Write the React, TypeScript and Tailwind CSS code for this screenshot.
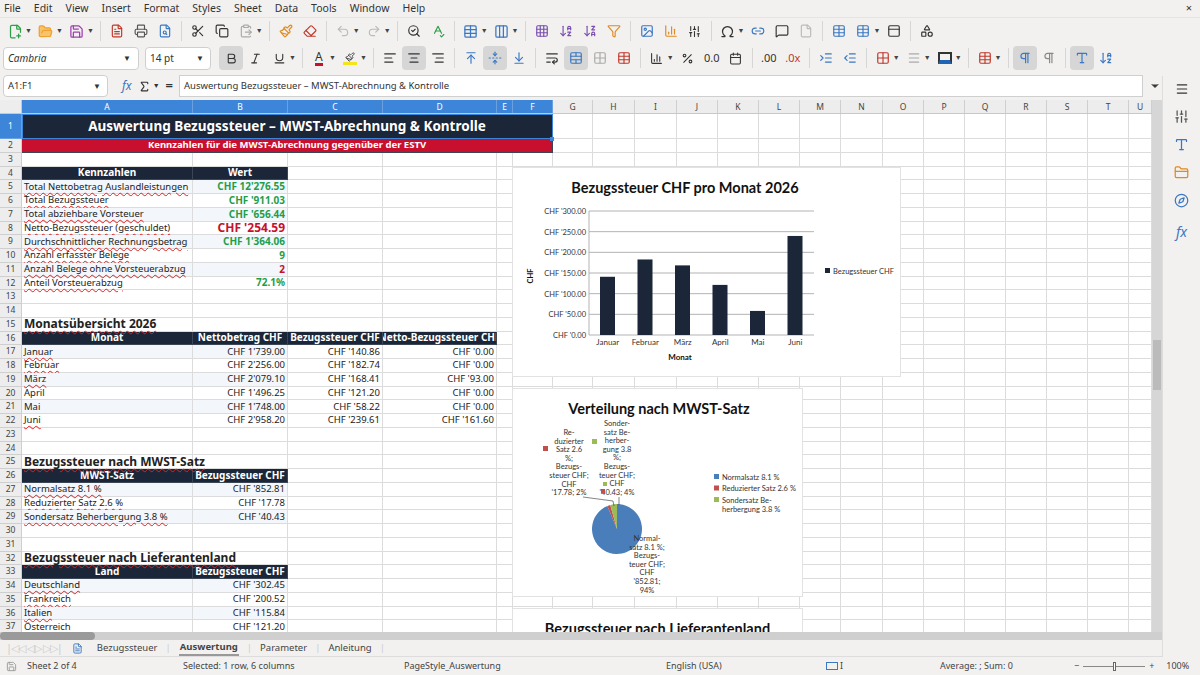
import {
  FilePlus2, FolderOpen, Save, FileText, Printer, FileSearch, Scissors, Copy, ClipboardPaste,
  Paintbrush, Eraser, Undo2, Redo2, SearchCheck, SpellCheck, Table, Columns3, ArrowDownAZ,
  ArrowDownZA, Filter, Image, BarChart3, Sigma, Link2, MessageSquare, File, PanelTop, Shapes,
  Bold, Italic, Underline, AlignLeft, AlignCenter, AlignRight, ArrowUpToLine, FoldVertical,
  ArrowDownToLine, WrapText, TableCellsMerge, Percent, Calendar, IndentIncrease, IndentDecrease,
  Grid2x2, Menu, Sliders, Type, FolderClosed, Compass, ChevronDown, Omega, Grid3x3, Pilcrow,
} from "lucide-react";

const ui = "font-[family-name:'Noto_Sans',sans-serif]";
const serif = "font-[family-name:'Liberation_Serif','DejaVu_Serif',serif]";
const sans = "font-[family-name:'Open_Sans','Noto_Sans',sans-serif]";
const chartFont = "Lato, 'Liberation Sans', sans-serif";

const cols = [
  ["A", 171], ["B", 95], ["C", 95], ["D", 114], ["E", 16], ["F", 40], ["G", 40], ["H", 42], ["I", 42],
  ["J", 41], ["K", 41], ["L", 41], ["M", 41], ["N", 42], ["O", 41], ["P", 41], ["Q", 41], ["R", 41],
  ["S", 41], ["T", 41], ["U", 23],
] as const;

type Cell = { t: string; cls?: string; span?: number; font?: string };
const wavy = "underline decoration-wavy decoration-[#e02020] decoration-1 underline-offset-2";
const hdr = `bg-[#1b2638] text-white font-bold text-center text-[10px]`;
const green = "text-[#1e9e4a] font-bold text-right text-[10px]";
const red = "text-[#c8102e] font-bold text-right text-[10px]";

const rows: Record<number, Cell[]> = {
  1: [{ t: "Auswertung Bezugssteuer – MWST-Abrechnung & Kontrolle", span: 6, cls: `bg-[#1b2638] text-white font-bold text-center text-[13.5px] outline outline-1 outline-[#3d85d8] -outline-offset-1` }],
  2: [{ t: "Kennzahlen für die MWST-Abrechnung gegenüber der ESTV", span: 6, cls: `bg-[#c8102e] text-white font-bold text-center text-[9.5px]` }],
  4: [{ t: "Kennzahlen", cls: hdr }, { t: "Wert", cls: hdr }],
  5: [{ t: "Total Nettobetrag Auslandleistungen", cls: wavy }, { t: "CHF 12'276.55", cls: green }],
  6: [{ t: "Total Bezugssteuer", cls: wavy }, { t: "CHF '911.03", cls: green }],
  7: [{ t: "Total abziehbare Vorsteuer", cls: wavy }, { t: "CHF '656.44", cls: green }],
  8: [{ t: "Netto-Bezugssteuer (geschuldet)", cls: wavy }, { t: "CHF '254.59", cls: "text-[#c8102e] font-bold text-right text-[12px]" }],
  9: [{ t: "Durchschnittlicher Rechnungsbetrag", cls: wavy }, { t: "CHF 1'364.06", cls: green }],
  10: [{ t: "Anzahl erfasster Belege", cls: wavy }, { t: "9", cls: green }],
  11: [{ t: "Anzahl Belege ohne Vorsteuerabzug", cls: wavy }, { t: "2", cls: red }],
  12: [{ t: "Anteil Vorsteuerabzug", cls: wavy }, { t: "72.1%", cls: green }],
  15: [{ t: "Monatsübersicht 2026", cls: `font-bold text-[12px] ${wavy}` }],
  16: [{ t: "Monat", cls: hdr }, { t: "Nettobetrag CHF", cls: hdr }, { t: "Bezugssteuer CHF", cls: hdr }, { t: "Netto-Bezugssteuer CHF", cls: hdr }],
  25: [{ t: "Bezugssteuer nach MWST-Satz", cls: `font-bold text-[12px] ${wavy}` }],
  26: [{ t: "MWST-Satz", cls: hdr }, { t: "Bezugssteuer CHF", cls: hdr }],
  32: [{ t: "Bezugssteuer nach Lieferantenland", cls: `font-bold text-[12px] ${wavy}` }],
  33: [{ t: "Land", cls: hdr }, { t: "Bezugssteuer CHF", cls: hdr }],
};
const months = [
  ["Januar", "CHF 1'739.00", "CHF '140.86", "CHF '0.00"],
  ["Februar", "CHF 2'256.00", "CHF '182.74", "CHF '0.00"],
  ["März", "CHF 2'079.10", "CHF '168.41", "CHF '93.00"],
  ["April", "CHF 1'496.25", "CHF '121.20", "CHF '0.00"],
  ["Mai", "CHF 1'748.00", "CHF '58.22", "CHF '0.00"],
  ["Juni", "CHF 2'958.20", "CHF '239.61", "CHF '161.60"],
];
months.forEach((m, i) => {
  rows[17 + i] = [
    { t: m[0], cls: i === 3 || i === 4 ? "" : wavy },
    ...m.slice(1).map((v) => ({ t: v, cls: "text-right" })),
  ];
});
[["Normalsatz 8.1 %", "CHF '852.81"], ["Reduzierter Satz 2.6 %", "CHF '17.78"], ["Sondersatz Beherbergung 3.8 %", "CHF '40.43"]].forEach((r, i) => {
  rows[27 + i] = [{ t: r[0], cls: wavy, font: sans }, { t: r[1], cls: "text-right", font: sans }];
});
[["Deutschland", "CHF '302.45"], ["Frankreich", "CHF '200.52"], ["Italien", "CHF '115.84"], ["Österreich", "CHF '121.20"]].forEach((r, i) => {
  rows[34 + i] = [{ t: r[0], cls: i < 3 ? wavy : "", font: sans }, { t: r[1], cls: "text-right", font: sans }];
});
const banded = new Set([5, 7, 9, 11, 17, 19, 21, 27, 29, 34, 36]);

function Sep() {
  return <div className="w-px h-5 bg-[#d6d6d6] mx-1" />;
}
function Tb({ children, on }: { children: React.ReactNode; on?: boolean }) {
  return <div className={`h-6 min-w-6 px-[3px] flex items-center justify-center rounded-sm ${on ? "bg-[#d6d6d6]" : ""}`}>{children}</div>;
}
function Dd() {
  return <span className="text-[7px] text-[#444] -ml-0.5 mr-0.5">▼</span>;
}

function BarChart() {
  const vals = [140.86, 182.74, 168.41, 121.2, 58.22, 239.61];
  const names = ["Januar", "Februar", "März", "April", "Mai", "Juni"];
  const x0 = 76, x1 = 301, y0 = 167, h = 124;
  return (
    <div className="absolute left-[512px] top-[67px] w-[389px] h-[210px] bg-white border border-[#e2e2e2]">
      <svg width="389" height="210" style={{ fontFamily: chartFont }}>
        <text x="172" y="25" textAnchor="middle" fontSize="14.5" fontWeight="700" fill="#111">Bezugssteuer CHF pro Monat 2026</text>
        {[0, 50, 100, 150, 200, 250, 300].map((v) => {
          const y = y0 - (v / 300) * h;
          return (
            <g key={v}>
              <line x1={x0} x2={x1} y1={y} y2={y} stroke="#b3b3b3" strokeWidth="1" />
              <text x={x0 - 3} y={y + 3} textAnchor="end" fontSize="7.5" fill="#333">{`CHF '${v}.00`}</text>
            </g>
          );
        })}
        <line x1={x0} x2={x0} y1={y0 - h} y2={y0} stroke="#b3b3b3" />
        {vals.map((v, i) => {
          const cw = (x1 - x0) / 6;
          const bh = (v / 300) * h;
          return (
            <g key={i}>
              <rect x={x0 + cw * i + 11} y={y0 - bh} width="15" height={bh} fill="#1b2638" />
              <text x={x0 + cw * i + cw / 2} y={y0 + 10} textAnchor="middle" fontSize="8" fill="#333">{names[i]}</text>
            </g>
          );
        })}
        <text x="167" y="192" textAnchor="middle" fontSize="8" fontWeight="700" fill="#111">Monat</text>
        <text x="20" y="108" textAnchor="middle" fontSize="7.5" fontWeight="700" fill="#111" transform="rotate(-90 20 108)">CHF</text>
        <rect x="312" y="100" width="5" height="5" fill="#1b2638" />
        <text x="320" y="105.5" fontSize="7.5" fill="#333">Bezugssteuer CHF</text>
      </svg>
    </div>
  );
}

function PieChart() {
  const cx = 104, cy = 140, r = 25;
  const data = [
    [0.937, "#4a7ebb"],
    [0.0195, "#c0504d"],
    [0.0435, "#9bbb59"],
  ] as const;
  let a = 0;
  const slices = data.map(([p, c], i) => {
    const s = a, e = a + p * Math.PI * 2;
    a = e;
    const pt = (t: number) => `${cx + r * Math.sin(t)} ${cy - r * Math.cos(t)}`;
    return <path key={i} d={`M${cx} ${cy} L${pt(s)} A${r} ${r} 0 ${p > 0.5 ? 1 : 0} 1 ${pt(e)} Z`} fill={c} />;
  });
  const lines = (arr: string[], x: number, y: number) =>
    arr.map((l, i) => (
      <text key={i} x={x} y={y + i * 8.6} textAnchor="middle" fontSize="7.5" fill="#333">{l}</text>
    ));
  return (
    <div className="absolute left-[512px] top-[288px] w-[291px] h-[209px] bg-white border border-[#e2e2e2]">
      <svg width="291" height="209" style={{ fontFamily: chartFont }}>
        <text x="146" y="25" textAnchor="middle" fontSize="14.5" fontWeight="700" fill="#111">Verteilung nach MWST-Satz</text>
        {slices}
        {lines(["Re-", "duzierter", "Satz 2.6", "%;", "Bezugs-", "steuer CHF;", "CHF", "'17.78; 2%"], 56, 46)}
        {lines(["Sonder-", "satz Be-", "herber-", "gung 3.8", "%;", "Bezugs-", "teuer CHF;", "CHF", "'40.43; 4%"], 104, 37)}
        {lines(["Normal-", "satz 8.1 %;", "Bezugs-", "teuer CHF;", "CHF", "'852.81;", "94%"], 134, 152)}
        <rect x="30" y="57" width="5" height="5" fill="#c0504d" />
        <rect x="79" y="50" width="5" height="5" fill="#9bbb59" />
        <rect x="90" y="93" width="4" height="4" fill="#9bbb59" />
        <rect x="88" y="100" width="4" height="4" fill="#c0504d" />
        <polyline points="70,108 100,112 101,117" fill="none" stroke="#333" strokeWidth="0.6" />
        <line x1="106" y1="108" x2="106" y2="116" stroke="#333" strokeWidth="0.6" />
        {[["Normalsatz 8.1 %", "#4a7ebb"], ["Reduzierter Satz 2.6 %", "#c0504d"], ["Sondersatz Be-", "#9bbb59"]].map(([t, c], i) => (
          <g key={i}>
            <rect x="201" y={85 + i * 11.5} width="5" height="5" fill={c} />
            <text x="209" y={90.5 + i * 11.5} fontSize="7.5" fill="#333">{t}</text>
          </g>
        ))}
        <text x="209" y="122.5" fontSize="7.5" fill="#333">herbergung 3.8 %</text>
      </svg>
    </div>
  );
}

function Grid() {
  return (
    <div className="relative flex-1 overflow-hidden bg-white">
      <div className="flex h-[14px] bg-[#ededed] border-b border-[#c8c8c8]">
        <div className="w-[22px] shrink-0 border-r border-[#c8c8c8]" />
        {cols.map(([n, w], i) => (
          <div key={n} style={{ width: w }} className={`shrink-0 text-[8.5px] leading-[14px] text-center border-r ${i < 6 ? "bg-[#3d85d8] text-white border-[#6aa0e0]" : "text-[#444] border-[#cfcfcf]"}`}>{n}</div>
        ))}
      </div>
      {Array.from({ length: 37 }, (_, k) => {
        const r = k + 1;
        const cells = rows[r] ?? [];
        const out: React.ReactNode[] = [];
        let ci = 0, idx = 0;
        while (ci < cols.length) {
          const c = idx < cells.length ? cells[idx] : undefined;
          const span = c?.span ?? 1;
          const w = cols.slice(ci, ci + span).reduce((s, x) => s + x[1], 0);
          const cls = c?.cls ?? "";
          const isHdr = cls.includes("bg-[#1b2638]") || cls.includes("bg-[#c8102e]");
          const hasColor = /text-\[#|text-white/.test(cls);
          const band = banded.has(r) && ci < 2 && !isHdr ? "bg-[#f3f6fa]" : "";
          const sizeCls = /text-\[\d/.test(cls) ? "" : "text-[9.5px]";
          const just = cls.includes("text-right") ? "justify-end" : cls.includes("text-center") ? "justify-center" : "";
          const ov = ci === 0 && c && !cls.includes("text-center") ? "overflow-visible relative z-[1]" : "overflow-hidden";
          out.push(
            <div key={ci} style={{ width: w }} className={`shrink-0 h-full border-r border-b px-[2px] whitespace-nowrap flex items-center ${c?.font ?? serif} ${sizeCls} ${hasColor ? "" : "text-[#222]"} ${isHdr ? "border-[#3a4556]" : "border-[#dcdcdc]"} ${band} ${cls} ${ov} ${just}`}>
              {c && <span>{c.t}</span>}
            </div>
          );
          ci += span;
          idx++;
        }
        return (
          <div key={r} className={`flex ${r === 1 ? "h-[25px]" : "h-[13.75px]"}`}>
            <div className={`w-[22px] shrink-0 text-[8.5px] flex items-center justify-center border-r border-b ${r === 1 ? "bg-[#3d85d8] text-white border-[#6aa0e0]" : "bg-[#ededed] text-[#444] border-[#cfcfcf]"}`}>{r}</div>
            {out}
          </div>
        );
      })}
      <BarChart />
      <PieChart />
      <div className="absolute left-[512px] top-[508px] w-[291px] h-[40px] bg-white border border-[#e2e2e2] text-center pt-[9px] text-[14.5px] font-bold text-[#111] font-[family-name:Lato,sans-serif]">Bezugssteuer nach Lieferantenland</div>
      <div className="absolute left-[550px] top-[37px] w-[4px] h-[4px] bg-[#3d85d8]" />
    </div>
  );
}

export default function App() {
  return (
    <div className={`w-[1200px] h-[675px] flex flex-col bg-[#f2f1f0] text-[#333] overflow-hidden ${ui}`}>
      <div className="h-[17px] flex items-center gap-[13px] px-[4px] text-[10.5px] text-[#333]">
        {["File", "Edit", "View", "Insert", "Format", "Styles", "Sheet", "Data", "Tools", "Window", "Help"].map((m) => <span key={m}>{m}</span>)}
        <span className="ml-auto mr-1 text-[11px]">×</span>
      </div>
      <div className="h-[27px] flex items-center px-[3px] border-t border-[#e4e4e4]">
        <Tb><FilePlus2 size={15} className="text-[#2e9e4a]" /></Tb><Dd />
        <Tb><FolderOpen size={15} className="text-[#f0a030] fill-[#f7c46c]" /></Tb><Dd />
        <Tb><Save size={15} className="text-[#a03fb0]" /></Tb><Dd />
        <Sep />
        <Tb><FileText size={14} className="text-[#c0392b]" /></Tb>
        <Tb><Printer size={14} className="text-[#555]" /></Tb>
        <Tb><FileSearch size={14} className="text-[#3a78c3]" /></Tb>
        <Sep />
        <Tb><Scissors size={14} /></Tb><Tb><Copy size={14} /></Tb><Tb><ClipboardPaste size={14} className="text-[#aaa]" /></Tb><Dd />
        <Sep />
        <Tb><Paintbrush size={14} className="text-[#e08a20]" /></Tb><Tb><Eraser size={14} className="text-[#c0392b]" /></Tb>
        <Sep />
        <Tb><Undo2 size={14} className="text-[#bbb]" /></Tb><Dd /><Tb><Redo2 size={14} className="text-[#bbb]" /></Tb><Dd />
        <Sep />
        <Tb><SearchCheck size={14} /></Tb><Tb><SpellCheck size={14} className="text-[#2e9e4a]" /></Tb>
        <Sep />
        <Tb><Table size={15} className="text-[#3a78c3]" /></Tb><Dd /><Tb><Columns3 size={15} className="text-[#3a78c3]" /></Tb><Dd />
        <Sep />
        <Tb><Grid3x3 size={14} className="text-[#7a4fb0]" /></Tb><Tb><ArrowDownAZ size={14} className="text-[#7a4fb0]" /></Tb><Tb><ArrowDownZA size={14} className="text-[#7a4fb0]" /></Tb><Tb><Filter size={14} className="text-[#e08a20]" /></Tb>
        <Sep />
        <Tb><Image size={14} className="text-[#3a78c3]" /></Tb><Tb><BarChart3 size={14} className="text-[#e08a20]" /></Tb><Tb><Sliders size={13} /></Tb>
        <Sep />
        <Tb><Omega size={15} /></Tb><Dd /><Tb><Link2 size={14} className="text-[#3a78c3]" /></Tb><Tb><MessageSquare size={14} /></Tb><Tb><File size={14} className="text-[#bbb]" /></Tb>
        <Sep />
        <Tb><Table size={14} className="text-[#3a78c3]" /></Tb><Tb><Table size={14} className="text-[#3a78c3]" /></Tb><Dd /><Tb><PanelTop size={14} /></Tb>
        <Sep />
        <Tb><Shapes size={14} /></Tb>
      </div>
      <div className="h-[28px] flex items-center px-[3px]">
        <div className="w-[136px] h-[23px] bg-white border border-[#cfcfcf] rounded-sm flex items-center">
          <span className="flex-1 pl-[4px] italic text-[10px]">Cambria</span>
          <span className="w-[22px] text-[8px] text-center">▼</span>
        </div>
        <div className="w-[66px] h-[23px] bg-white border border-[#cfcfcf] rounded-sm flex items-center ml-[6px]">
          <span className="flex-1 pl-[4px] text-[10px]">14 pt</span>
          <span className="w-[20px] text-[8px] text-center">▼</span>
        </div>
        <div className="ml-[8px] flex items-center">
          <Tb on><Bold size={13} /></Tb><Tb><Italic size={13} /></Tb><Tb><Underline size={13} /></Tb><Dd />
          <Sep />
          <Tb><span className="text-[12px] leading-none border-b-[3px] border-[#c8102e]">A</span></Tb><Dd />
          <Tb><span className="w-[14px] h-[14px] border-b-[3px] border-[#f3e41c] flex items-center justify-center"><Paintbrush size={10} /></span></Tb><Dd />
          <Sep />
          <Tb><AlignLeft size={14} /></Tb><Tb on><AlignCenter size={14} /></Tb><Tb><AlignRight size={14} /></Tb>
          <Sep />
          <Tb><ArrowUpToLine size={14} className="text-[#3a78c3]" /></Tb><Tb on><FoldVertical size={14} className="text-[#3a78c3]" /></Tb><Tb><ArrowDownToLine size={14} className="text-[#3a78c3]" /></Tb>
          <Sep />
          <Tb><WrapText size={14} /></Tb><Tb on><TableCellsMerge size={14} className="text-[#3a78c3]" /></Tb><Tb><Grid2x2 size={14} className="text-[#aaa]" /></Tb><Tb><Table size={14} className="text-[#c0392b]" /></Tb>
          <Sep />
          <Tb><BarChart3 size={13} /></Tb><Dd /><Tb><Percent size={13} /></Tb><Tb><span className="text-[11px]">0.0</span></Tb><Tb><Calendar size={13} /></Tb>
          <Sep />
          <Tb><span className="text-[11px] text-[#333]">.00</span></Tb><Tb><span className="text-[11px] text-[#c0392b]">.0x</span></Tb>
          <Sep />
          <Tb><IndentIncrease size={14} className="text-[#3a78c3]" /></Tb><Tb><IndentDecrease size={14} className="text-[#3a78c3]" /></Tb>
          <Sep />
          <Tb><Grid2x2 size={14} className="text-[#c0392b]" /></Tb><Dd /><Tb><Menu size={14} className="text-[#aaa]" /></Tb><Dd />
          <Tb><span className="w-[14px] h-[12px] border-2 border-[#333] border-b-[4px] border-b-[#1f64b5]" /></Tb><Dd />
          <Sep />
          <Tb><Table size={14} className="text-[#c0392b]" /></Tb><Dd />
          <Sep />
          <Tb on><Pilcrow size={14} className="text-[#3a78c3]" /></Tb><Tb><Pilcrow size={14} className="text-[#888]" /></Tb>
          <Sep />
          <Tb on><Type size={14} className="text-[#3a78c3]" /></Tb><Tb><ArrowDownAZ size={14} className="text-[#3a78c3]" /></Tb>
        </div>
      </div>
      <div className="h-[28px] flex items-center px-[3px] gap-[6px]">
        <div className="w-[105px] h-[22px] bg-white border border-[#cfcfcf] rounded-sm flex items-center">
          <span className="flex-1 pl-[4px] text-[9.5px]">A1:F1</span>
          <span className="w-[20px] text-[8px] text-center">▼</span>
        </div>
        <span className="ml-[8px] italic text-[#3a78c3] text-[12px] font-[family-name:'Liberation_Serif',serif]">fx</span>
        <Sigma size={13} /><span className="text-[7px] -ml-1">▼</span>
        <span className="text-[13px] font-bold">=</span>
        <div className="flex-1 h-[22px] bg-white border border-[#cfcfcf] flex items-center pl-[4px] text-[9.5px]">Auswertung Bezugssteuer – MWST-Abrechnung &amp; Kontrolle</div>
        <ChevronDown size={12} className="mr-[36px] fill-[#333]" />
      </div>
      <div className="flex-1 flex min-h-0">
        <div className="flex-1 flex flex-col min-w-0">
          <div className="flex-1 flex min-h-0">
            <Grid />
            <div className="w-[10px] bg-[#d6d6d6] relative">
              <div className="absolute top-[240px] left-[1px] w-[8px] h-[50px] bg-[#bbb]" />
            </div>
          </div>
          <div className="h-[8px] bg-[#cfcfcf] flex"><div className="w-[95px] bg-[#9a9a9a] rounded-sm" /></div>
          <div className="h-[17px] flex items-center text-[9.5px] text-[#444] border-b border-[#ddd]">
            <span className="ml-[6px] text-[#ccc] tracking-[-1px] text-[11px]">|◁◁ ◁▷ ▷▷|</span>
            <FileText size={11} className="ml-[10px] text-[#3a78c3]" />
            <span className="ml-[14px]">Bezugssteuer</span><span className="mx-[8px] text-[#ccc]">|</span>
            <span className="font-bold border-b-2 border-[#999] px-[1px]">Auswertung</span><span className="mx-[8px] text-[#ccc]">|</span>
            <span>Parameter</span><span className="mx-[8px] text-[#ccc]">|</span>
            <span>Anleitung</span><span className="mx-[8px] text-[#ccc]">|</span>
          </div>
        </div>
        <div className="w-[38px] border-l border-[#ddd] flex flex-col items-center gap-[13px] pt-[6px] -mt-[24px] bg-[#f2f1f0]">
          <Menu size={14} />
          <Sliders size={15} className="text-[#555]" />
          <Type size={15} className="text-[#3a78c3]" />
          <FolderClosed size={15} className="text-[#e08a20]" />
          <Compass size={15} className="text-[#3a78c3]" />
          <span className="italic text-[#3a78c3] text-[14px] font-[family-name:'Liberation_Serif',serif]">fx</span>
        </div>
      </div>
      <div className="h-[18px] flex items-center text-[9px] text-[#444]">
        <Save size={11} className="ml-[6px] text-[#999]" />
        <span className="ml-[10px] w-[156px]">Sheet 2 of 4</span>
        <span className="w-[221px]">Selected: 1 row, 6 columns</span>
        <span className="w-[262px]">PageStyle_Auswertung</span>
        <span className="w-[160px]">English (USA)</span>
        <span className="w-[12px] h-[8px] border border-[#3a78c3]" /><span className="ml-[2px] w-[100px]">I</span>
        <span className="w-[134px]">Average: ; Sum: 0</span>
        <span>−</span>
        <div className="w-[62px] h-px bg-[#888] mx-[4px] relative"><div className="absolute left-[30px] -top-[4px] w-[3px] h-[9px] border border-[#666] bg-white" /></div>
        <span>+</span>
        <span className="ml-[12px]">100%</span>
      </div>
    </div>
  );
}
